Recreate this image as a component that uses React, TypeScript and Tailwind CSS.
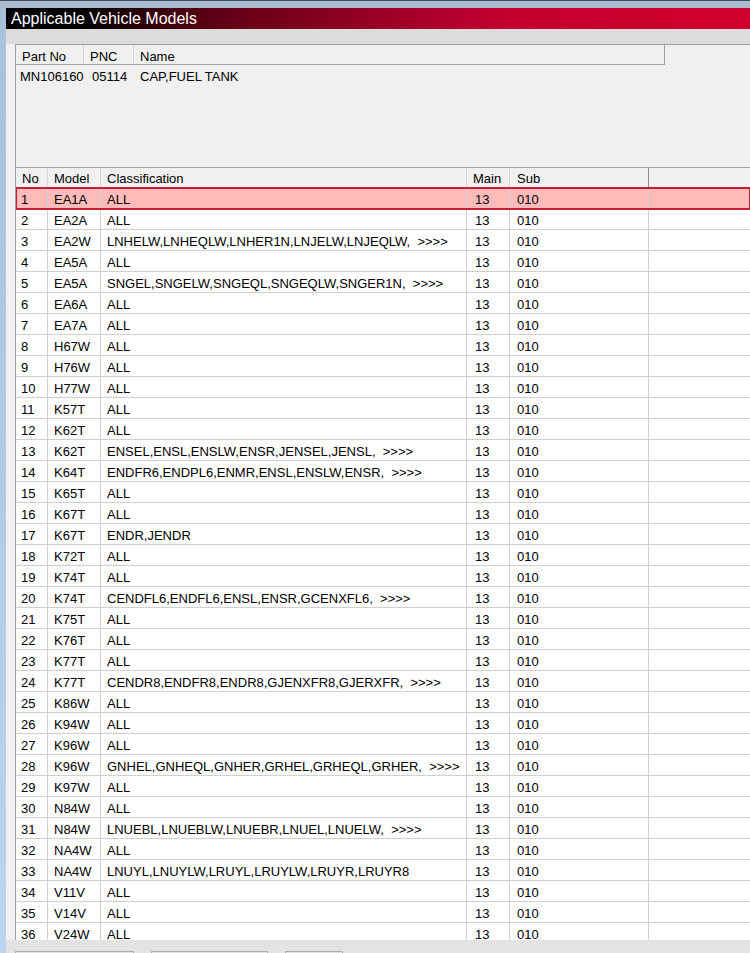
import React from "react";

const rows: [string, string][] = [
  ["EA1A", "ALL"],
  ["EA2A", "ALL"],
  ["EA2W", "LNHELW,LNHEQLW,LNHER1N,LNJELW,LNJEQLW,  >>>>"],
  ["EA5A", "ALL"],
  ["EA5A", "SNGEL,SNGELW,SNGEQL,SNGEQLW,SNGER1N,  >>>>"],
  ["EA6A", "ALL"],
  ["EA7A", "ALL"],
  ["H67W", "ALL"],
  ["H76W", "ALL"],
  ["H77W", "ALL"],
  ["K57T", "ALL"],
  ["K62T", "ALL"],
  ["K62T", "ENSEL,ENSL,ENSLW,ENSR,JENSEL,JENSL,  >>>>"],
  ["K64T", "ENDFR6,ENDPL6,ENMR,ENSL,ENSLW,ENSR,  >>>>"],
  ["K65T", "ALL"],
  ["K67T", "ALL"],
  ["K67T", "ENDR,JENDR"],
  ["K72T", "ALL"],
  ["K74T", "ALL"],
  ["K74T", "CENDFL6,ENDFL6,ENSL,ENSR,GCENXFL6,  >>>>"],
  ["K75T", "ALL"],
  ["K76T", "ALL"],
  ["K77T", "ALL"],
  ["K77T", "CENDR8,ENDFR8,ENDR8,GJENXFR8,GJERXFR,  >>>>"],
  ["K86W", "ALL"],
  ["K94W", "ALL"],
  ["K96W", "ALL"],
  ["K96W", "GNHEL,GNHEQL,GNHER,GRHEL,GRHEQL,GRHER,  >>>>"],
  ["K97W", "ALL"],
  ["N84W", "ALL"],
  ["N84W", "LNUEBL,LNUEBLW,LNUEBR,LNUEL,LNUELW,  >>>>"],
  ["NA4W", "ALL"],
  ["NA4W", "LNUYL,LNUYLW,LRUYL,LRUYLW,LRUYR,LRUYR8"],
  ["V11V", "ALL"],
  ["V14V", "ALL"],
  ["V24W", "ALL"],
];

const gridCols = "grid grid-cols-[32px_53px_366px_43px_139px_1fr]";

export default function App() {
  return (
    <div className="w-[750px] h-[953px] overflow-hidden flex flex-col bg-[#f0f0f0] font-['Liberation_Sans',Arial,sans-serif] text-[13px] text-black leading-none">
      <div className="h-[1px] bg-[#3b4a5c] shrink-0" />
      <div className="h-[7px] bg-[#a9bcd2] shrink-0" />
      <div className="flex flex-1 min-h-0">
        <div className="w-[6px] shrink-0 bg-[linear-gradient(to_bottom,#aac0d8,#bdd4ee)]" />
        <div className="flex-1 flex flex-col min-w-0">
          {/* title bar */}
          <div className="h-[21px] shrink-0 flex items-center pl-[5px] text-white text-[16px] bg-[linear-gradient(to_right,#000_0%,#000_10%,#5a0012_27%,#9a0025_50%,#c3002e_67%,#d2002c_100%)]">
            Applicable Vehicle Models
          </div>
          <div className="h-[15px] shrink-0 bg-[#dcdcdc]" />

          {/* part panel */}
          <div className="ml-[9px] h-[123px] shrink-0 border-t border-l border-[#a0a0a0] bg-[#f0f0f0] flex flex-col">
            <div className="flex h-[20px] shrink-0">
              <div className="flex w-[649px] border-b border-r border-[#a0a0a0]">
                <div className="w-[68px] pl-[6px] pt-[3px] flex items-center border-r border-[#d5d5d5]">Part No</div>
                <div className="w-[50px] pl-[6px] pt-[3px] flex items-center border-r border-[#d5d5d5]">PNC</div>
                <div className="flex-1 pl-[6px] pt-[3px] flex items-center">Name</div>
              </div>
            </div>
            <div className="flex h-[21px] items-center pt-[2px]">
              <div className="w-[68px] pl-[4px]">MN106160</div>
              <div className="w-[50px] pl-[8px]">05114</div>
              <div className="pl-[6px]">CAP,FUEL TANK</div>
            </div>
          </div>

          {/* vehicle table */}
          <div className="ml-[9px] h-[773px] shrink-0 overflow-hidden border-t border-l border-[#a0a0a0] bg-white flex flex-col">
            <div className={`${gridCols} h-[20px] shrink-0 bg-[#f0f0f0] border-b border-[#a0a0a0]`}>
              <div className="pl-[6px] pt-[2px] flex items-center border-r border-[#d5d5d5]">No</div>
              <div className="pl-[6px] pt-[2px] flex items-center border-r border-[#d5d5d5]">Model</div>
              <div className="pl-[6px] pt-[2px] flex items-center border-r border-[#d5d5d5]">Classification</div>
              <div className="pl-[6px] pt-[2px] flex items-center border-r border-[#d5d5d5]">Main</div>
              <div className="pl-[7px] pt-[2px] flex items-center border-r border-[#8a8a8a]">Sub</div>
              <div />
            </div>
            {rows.map(([model, cls], i) => {
              const sel = i === 0;
              return (
                <div
                  key={i}
                  className={`${gridCols} h-[21px] shrink-0 border-b border-[#d0d0d0] ${
                    sel ? "bg-[#ffbaba] outline-2 outline-[#c81e32] -outline-offset-1 relative z-10" : ""
                  }`}
                >
                  <div className="pl-[5px] pt-[2px] flex items-center border-r border-[#d0d0d0]">{i + 1}</div>
                  <div className="pl-[6px] pt-[2px] flex items-center border-r border-[#d0d0d0]">{model}</div>
                  <div className="pl-[6px] pt-[2px] flex items-center border-r border-[#d0d0d0] whitespace-pre">{cls}</div>
                  <div className="pl-[8px] pt-[2px] flex items-center border-r border-[#d0d0d0]">13</div>
                  <div className="pl-[7px] pt-[2px] flex items-center border-r border-[#d0d0d0]">010</div>
                  <div />
                </div>
              );
            })}
          </div>

          {/* bottom strip with buttons */}
          <div className="flex-1 bg-[#e3e3e3] flex gap-[17px] pl-[9px] pt-[11px]">
            <div className="w-[119px] h-[22px] border border-[#adadad] bg-[#e1e1e1] shrink-0" />
            <div className="w-[117px] h-[22px] border border-[#adadad] bg-[#e1e1e1] shrink-0" />
            <div className="w-[58px] h-[22px] border border-[#adadad] bg-[#e1e1e1] shrink-0" />
          </div>
        </div>
      </div>
    </div>
  );
}
